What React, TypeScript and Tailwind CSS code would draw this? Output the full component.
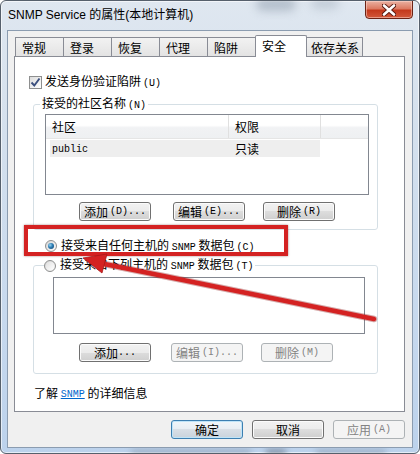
import React from "react";

const A = ({ children, g = false }: { children: React.ReactNode; g?: boolean }) => (
  <span className={`font-['Liberation_Mono',monospace] text-[10px] ${g ? "ml-[2px]" : ""}`}>{children}</span>
);

function Btn({
  children,
  className = "",
  disabled = false,
  focused = false,
}: {
  children: React.ReactNode;
  className?: string;
  disabled?: boolean;
  focused?: boolean;
}) {
  const look = disabled
    ? "border-[#adb2b5] bg-[#f4f4f4] text-[#838383]"
    : focused
    ? "border-[#3c7fb1] bg-[linear-gradient(#f0f6fa_0%,#e8eef3_50%,#d8dfe6_50%,#cad3dc_100%)] shadow-[inset_0_0_0_1px_#bfe4f8] text-black"
    : "border-[#707070] bg-[linear-gradient(#f2f2f2_0%,#ebebeb_50%,#dddddd_50%,#cfcfcf_100%)] shadow-[inset_0_0_0_1px_#fbfbfb] text-black";
  return (
    <div
      className={`h-[19px] w-[72px] shrink-0 rounded-[3px] border flex items-center justify-center leading-[14px] ${look} ${className}`}
    >
      {children}
    </div>
  );
}

function Radio({ checked = false }: { checked?: boolean }) {
  return (
    <div className="w-[12px] h-[12px] rounded-full border border-[#8e8f8f] bg-[linear-gradient(135deg,#d6d6d6,#fbfbfb)] flex items-center justify-center shrink-0">
      {checked ? (
        <div className="w-[6px] h-[6px] rounded-full bg-[radial-gradient(circle_at_35%_35%,#9ad4f2_0%,#2b7bb2_45%,#13406a_100%)]" />
      ) : (
        <div className="w-[8px] h-[8px] rounded-full bg-[linear-gradient(135deg,#e0e0e0,#ffffff)]" />
      )}
    </div>
  );
}

function Tab({
  label,
  w,
  selected = false,
  first = false,
  pl = "pl-[6px]",
}: {
  label: string;
  w: string;
  selected?: boolean;
  first?: boolean;
  pl?: string;
}) {
  return (
    <div
      className={`${w} ${first ? "" : "-ml-px"} ${pl} border-t border-l border-r border-[#898c95] flex items-center ${
        selected
          ? "relative z-10 h-[22px] bg-white pb-[2px] rounded-t-[2px]"
          : "h-[19px] mb-px bg-[linear-gradient(#f2f2f2,#e3e3e3)] pt-[2px]"
      }`}
    >
      {label}
    </div>
  );
}

export default function App() {
  return (
    <div className="w-[420px] h-[454px] bg-white">
      <div className="relative w-[420px] h-[454px] rounded-[6px] border border-[#56606c] bg-[linear-gradient(180deg,#dfe7f0_0%,#d4e0ed_30%,#c7d9ee_70%,#bcd2ec_100%)] shadow-[inset_0_0_0_1px_rgba(255,255,255,0.6)] flex flex-col px-[6px] pb-[5px] overflow-hidden font-['Noto_Sans_CJK_SC',sans-serif] text-[12px] text-black">
        {/* blurred background shapes behind glass */}
        <div className="absolute left-[255px] top-[-4px] w-[40px] h-[14px] rounded-full bg-[#8a98a8] opacity-50 blur-[5px]" />
        <div className="absolute left-[310px] top-[-4px] w-[28px] h-[12px] rounded-full bg-[#98a5b4] opacity-40 blur-[5px]" />
        <div className="absolute left-[130px] bottom-[-2px] w-[120px] h-[6px] bg-[#7f8fa3] opacity-50 blur-[3px]" />
        <div className="absolute left-[265px] bottom-[-2px] w-[20px] h-[6px] bg-[#5a6676] opacity-60 blur-[3px]" />
        <div className="absolute left-[315px] bottom-[-2px] w-[70px] h-[6px] bg-[#7f8fa3] opacity-50 blur-[3px]" />

        {/* title bar */}
        <div className="relative h-[29px] shrink-0 flex items-center pl-[1px] pb-[2px]">
          <span className="font-['Liberation_Sans','Noto_Sans_CJK_SC',sans-serif] text-[12px] text-black leading-none">
            SNMP Service 的属性(本地计算机)
          </span>
          <div className="absolute right-[0px] top-[-1px] w-[48px] h-[19px] rounded-b-[4px] border border-[#6b2315] bg-[linear-gradient(180deg,#eab1a2_0%,#dc7a62_45%,#c4391c_55%,#d2583a_100%)] shadow-[inset_0_0_0_1px_rgba(255,220,210,0.5)] flex items-center justify-center">
            <svg width="14" height="12" viewBox="0 0 14 12">
              <path d="M2 1.5 L12 10.5 M12 1.5 L2 10.5" stroke="#5a1a10" strokeWidth="4.5" strokeLinecap="round" />
              <path d="M2 1.5 L12 10.5 M12 1.5 L2 10.5" stroke="#ffffff" strokeWidth="2.6" strokeLinecap="round" />
            </svg>
          </div>
        </div>

        {/* client area */}
        <div className="relative h-[418px] border border-[#8b9cb0] bg-[#f0f0f0] flex flex-col px-[6px] pt-[4px] leading-[14px]">
          {/* tabs */}
          <div className="flex items-end ml-[1px] -mb-px">
            <Tab label="常规" w="w-[49px]" first />
            <Tab label="登录" w="w-[49px]" />
            <Tab label="恢复" w="w-[49px]" />
            <Tab label="代理" w="w-[49px]" />
            <Tab label="陷阱" w="w-[49px]" />
            <Tab label="安全" w="w-[52px]" selected />
            <Tab label="依存关系" w="w-[57px]" pl="pl-[4px]" />
          </div>

          {/* panel */}
          <div className="h-[356px] w-[391px] border border-[#898c95] bg-white flex flex-col">
            {/* checkbox */}
            <div className="mt-[18px] ml-[14px] flex items-center h-[14px]">
              <div className="w-[13px] h-[13px] border border-[#8e8f8f] bg-[linear-gradient(135deg,#dcdcdc,#ffffff)] flex items-center justify-center">
                <svg width="11" height="11" viewBox="0 0 11 11">
                  <path d="M1.5 5.5 L4.3 8.5 L9.5 1.5" stroke="#3b4f7e" strokeWidth="1.9" fill="none" />
                </svg>
              </div>
              <span className="ml-[3px]">
                发送身份验证陷阱<A g>(U)</A>
              </span>
            </div>

            {/* group 1 */}
            <fieldset className="mt-[7px] ml-[18px] w-[345px] border border-[#d5dfe5] rounded-[3px] pb-[8px]">
              <legend className="ml-[6px] px-[2px] leading-[14px]">
                接受的社区名称<A g>(N)</A>
              </legend>
              <div className="mt-[1px] ml-[11px] w-[324px] h-[81px] border border-[#828790] bg-white flex flex-col">
                <div className="flex h-[24px] bg-[linear-gradient(#ffffff_0%,#ffffff_45%,#f1f2f4_55%,#eef0f2_100%)] border-b border-[#e5e5e5]">
                  <div className="w-[183px] pl-[6px] flex items-center border-r border-[#e0e0e0]">社区</div>
                  <div className="w-[92px] pl-[6px] flex items-center border-r border-[#e0e0e0]">权限</div>
                  <div className="flex-1" />
                </div>
                <div className="mt-[1px] ml-[4px] w-[270px] h-[17px] bg-[#eeeeee] flex items-center">
                  <div className="w-[185px] pl-[2px]">
                    <A>public</A>
                  </div>
                  <div>只读</div>
                </div>
              </div>
              <div className="mt-[7px] ml-[45px] flex">
                <Btn>
                  添加<A g>(D)...</A>
                </Btn>
                <Btn className="ml-[22px]">
                  编辑<A g>(E)...</A>
                </Btn>
                <Btn className="ml-[18px]">
                  删除<A g>(R)</A>
                </Btn>
              </div>
            </fieldset>

            {/* radio 1 */}
            <div className="mt-[9px] ml-[30px] flex items-center h-[14px]">
              <Radio checked />
              <span className="ml-[4px]">
                接受来自任何主机的 <A>SNMP</A> 数据包<A g>(C)</A>
              </span>
            </div>

            {/* group 2 */}
            <fieldset className="mt-[4px] ml-[18px] w-[345px] border border-[#d5dfe5] rounded-[3px] pb-[11px]">
              <legend className="ml-[10px] pr-[2px] leading-[14px]">
                <span className="flex items-center bg-white">
                  <Radio />
                  <span className="ml-[4px]">
                    接受来自下列主机的 <A>SNMP</A> 数据包<A g>(T)</A>
                  </span>
                </span>
              </legend>
              <div className="mt-[3px] ml-[19px] w-[312px] h-[57px] border border-[#828790] bg-white" />
              <div className="mt-[9px] ml-[45px] flex">
                <Btn>
                  添加<A>...</A>
                </Btn>
                <Btn className="ml-[20px]" disabled>
                  编辑<A g>(I)...</A>
                </Btn>
                <Btn className="ml-[18px]" disabled>
                  删除<A g>(M)</A>
                </Btn>
              </div>
            </fieldset>

            {/* info */}
            <div className="mt-[12px] ml-[19px] h-[14px] flex items-center">
              了解&nbsp;
              <span className="text-[#0066cc] underline">
                <A>SNMP</A>
              </span>
              &nbsp;的详细信息
            </div>
          </div>

          {/* bottom buttons */}
          <div className="mt-[8px] w-[391px] flex justify-end gap-[9px]">
            <Btn focused>确定</Btn>
            <Btn>取消</Btn>
            <Btn disabled>
              应用<A g>(A)</A>
            </Btn>
          </div>
        </div>

        {/* annotation: red box */}
        <div className="absolute left-[23px] top-[224px] w-[264px] h-[31px] border-[4px] border-[#d42222] shadow-[0_0_2px_rgba(80,0,0,0.5)]" />

        {/* annotation: red arrow */}
        <svg className="absolute left-0 top-0 pointer-events-none" width="420" height="454" viewBox="0 0 420 454">
          <line x1="373" y1="318" x2="101" y2="262.5" stroke="#8a1010" strokeWidth="6.5" strokeLinecap="round" opacity="0.35" />
          <line x1="373" y1="318" x2="101" y2="262.5" stroke="#d42222" strokeWidth="4.5" strokeLinecap="round" />
          <polygon points="82,257 106,253 101,272" fill="#d42222" stroke="#a81818" strokeWidth="0.8" />
        </svg>
      </div>
    </div>
  );
}
